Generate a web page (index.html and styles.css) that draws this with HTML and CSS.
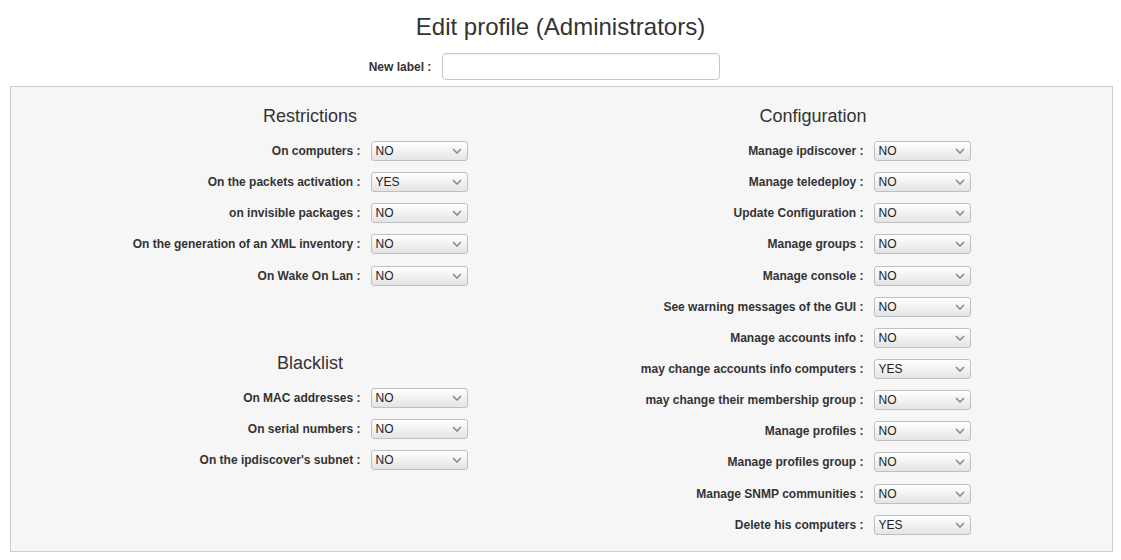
FILE: index.html
```html
<!DOCTYPE html>
<html>
<head>
<meta charset="utf-8">
<title>Edit profile</title>
<link rel="stylesheet" href="styles.css">
</head>
<body>
<h1 class="title">Edit profile (Administrators)</h1>
<div class="label-row">
  <label class="new-label" for="nl">New label :</label>
  <input id="nl" class="text-input" type="text">
</div>
<div class="panel">
  <div class="columns">
    <div class="col">
      <h3 class="section">Restrictions</h3>
      <div class="row"><span class="lbl">On computers :</span><div class="sel"><select><option>NO</option></select><svg class="chev" viewBox="0 0 10 6"><path d="M1 1l4 4 4-4" fill="none" stroke="#8a8a8a" stroke-width="1.6"/></svg></div></div>
      <div class="row"><span class="lbl">On the packets activation :</span><div class="sel"><select><option>YES</option></select><svg class="chev" viewBox="0 0 10 6"><path d="M1 1l4 4 4-4" fill="none" stroke="#8a8a8a" stroke-width="1.6"/></svg></div></div>
      <div class="row"><span class="lbl">on invisible packages :</span><div class="sel"><select><option>NO</option></select><svg class="chev" viewBox="0 0 10 6"><path d="M1 1l4 4 4-4" fill="none" stroke="#8a8a8a" stroke-width="1.6"/></svg></div></div>
      <div class="row"><span class="lbl">On the generation of an XML inventory :</span><div class="sel"><select><option>NO</option></select><svg class="chev" viewBox="0 0 10 6"><path d="M1 1l4 4 4-4" fill="none" stroke="#8a8a8a" stroke-width="1.6"/></svg></div></div>
      <div class="row"><span class="lbl">On Wake On Lan :</span><div class="sel"><select><option>NO</option></select><svg class="chev" viewBox="0 0 10 6"><path d="M1 1l4 4 4-4" fill="none" stroke="#8a8a8a" stroke-width="1.6"/></svg></div></div>

      <h3 class="section blacklist">Blacklist</h3>
      <div class="row"><span class="lbl">On MAC addresses :</span><div class="sel"><select><option>NO</option></select><svg class="chev" viewBox="0 0 10 6"><path d="M1 1l4 4 4-4" fill="none" stroke="#8a8a8a" stroke-width="1.6"/></svg></div></div>
      <div class="row"><span class="lbl">On serial numbers :</span><div class="sel"><select><option>NO</option></select><svg class="chev" viewBox="0 0 10 6"><path d="M1 1l4 4 4-4" fill="none" stroke="#8a8a8a" stroke-width="1.6"/></svg></div></div>
      <div class="row"><span class="lbl">On the ipdiscover's subnet :</span><div class="sel"><select><option>NO</option></select><svg class="chev" viewBox="0 0 10 6"><path d="M1 1l4 4 4-4" fill="none" stroke="#8a8a8a" stroke-width="1.6"/></svg></div></div>
    </div>
    <div class="col">
      <h3 class="section">Configuration</h3>
      <div class="row"><span class="lbl">Manage ipdiscover :</span><div class="sel"><select><option>NO</option></select><svg class="chev" viewBox="0 0 10 6"><path d="M1 1l4 4 4-4" fill="none" stroke="#8a8a8a" stroke-width="1.6"/></svg></div></div>
      <div class="row"><span class="lbl">Manage teledeploy :</span><div class="sel"><select><option>NO</option></select><svg class="chev" viewBox="0 0 10 6"><path d="M1 1l4 4 4-4" fill="none" stroke="#8a8a8a" stroke-width="1.6"/></svg></div></div>
      <div class="row"><span class="lbl">Update Configuration :</span><div class="sel"><select><option>NO</option></select><svg class="chev" viewBox="0 0 10 6"><path d="M1 1l4 4 4-4" fill="none" stroke="#8a8a8a" stroke-width="1.6"/></svg></div></div>
      <div class="row"><span class="lbl">Manage groups :</span><div class="sel"><select><option>NO</option></select><svg class="chev" viewBox="0 0 10 6"><path d="M1 1l4 4 4-4" fill="none" stroke="#8a8a8a" stroke-width="1.6"/></svg></div></div>
      <div class="row"><span class="lbl">Manage console :</span><div class="sel"><select><option>NO</option></select><svg class="chev" viewBox="0 0 10 6"><path d="M1 1l4 4 4-4" fill="none" stroke="#8a8a8a" stroke-width="1.6"/></svg></div></div>
      <div class="row"><span class="lbl">See warning messages of the GUI :</span><div class="sel"><select><option>NO</option></select><svg class="chev" viewBox="0 0 10 6"><path d="M1 1l4 4 4-4" fill="none" stroke="#8a8a8a" stroke-width="1.6"/></svg></div></div>
      <div class="row"><span class="lbl">Manage accounts info :</span><div class="sel"><select><option>NO</option></select><svg class="chev" viewBox="0 0 10 6"><path d="M1 1l4 4 4-4" fill="none" stroke="#8a8a8a" stroke-width="1.6"/></svg></div></div>
      <div class="row"><span class="lbl">may change accounts info computers :</span><div class="sel"><select><option>YES</option></select><svg class="chev" viewBox="0 0 10 6"><path d="M1 1l4 4 4-4" fill="none" stroke="#8a8a8a" stroke-width="1.6"/></svg></div></div>
      <div class="row"><span class="lbl">may change their membership group :</span><div class="sel"><select><option>NO</option></select><svg class="chev" viewBox="0 0 10 6"><path d="M1 1l4 4 4-4" fill="none" stroke="#8a8a8a" stroke-width="1.6"/></svg></div></div>
      <div class="row"><span class="lbl">Manage profiles :</span><div class="sel"><select><option>NO</option></select><svg class="chev" viewBox="0 0 10 6"><path d="M1 1l4 4 4-4" fill="none" stroke="#8a8a8a" stroke-width="1.6"/></svg></div></div>
      <div class="row"><span class="lbl">Manage profiles group :</span><div class="sel"><select><option>NO</option></select><svg class="chev" viewBox="0 0 10 6"><path d="M1 1l4 4 4-4" fill="none" stroke="#8a8a8a" stroke-width="1.6"/></svg></div></div>
      <div class="row"><span class="lbl">Manage SNMP communities :</span><div class="sel"><select><option>NO</option></select><svg class="chev" viewBox="0 0 10 6"><path d="M1 1l4 4 4-4" fill="none" stroke="#8a8a8a" stroke-width="1.6"/></svg></div></div>
      <div class="row"><span class="lbl">Delete his computers :</span><div class="sel"><select><option>YES</option></select><svg class="chev" viewBox="0 0 10 6"><path d="M1 1l4 4 4-4" fill="none" stroke="#8a8a8a" stroke-width="1.6"/></svg></div></div>
    </div>
  </div>
</div>
</body>
</html>
```
FILE: styles.css
```css
html, body {
  margin: 0;
  padding: 0;
  background: #ffffff;
  font-family: "Liberation Sans", Arial, sans-serif;
  color: #333333;
}

.title {
  margin: 14px 0 0 0;
  font-size: 24px;
  line-height: 26px;
  font-weight: normal;
  text-align: center;
  color: #333333;
}

.label-row {
  display: flex;
  justify-content: center;
  align-items: center;
  margin-top: 13px;
  padding-right: 32px;
}

.new-label {
  font-size: 12px;
  font-weight: bold;
  margin-right: 11px;
}

.text-input {
  box-sizing: border-box;
  width: 278px;
  height: 27px;
  border: 1px solid #c8c8c8;
  border-radius: 4px;
  background: #fff;
  box-shadow: inset 0 1px 1px rgba(0,0,0,0.06);
  font-family: inherit;
  font-size: 12px;
  padding: 2px 6px;
}

.panel {
  margin: 6px 8px 0 10px;
  border: 1px solid #cccccc;
  background: #f6f6f6;
  padding: 19px 0 16px 0;
}

.columns {
  width: 1006px;
  margin: 0 auto;
  display: grid;
  grid-template-columns: 503px 503px;
}

.section {
  margin: 0 0 15px 0;
  font-size: 18px;
  line-height: 20px;
  font-weight: normal;
  text-align: center;
  color: #333333;
}

.section.blacklist {
  margin-top: 67px;
}

.row {
  display: grid;
  grid-template-columns: 302px 97px;
  column-gap: 10px;
  align-items: center;
  height: 20px;
  margin-bottom: 11.15px;
}

.row:last-child {
  margin-bottom: 0;
}

.lbl {
  text-align: right;
  font-size: 12px;
  font-weight: bold;
  color: #333333;
  white-space: nowrap;
}

.sel {
  position: relative;
  width: 97px;
  height: 20px;
}

.sel select {
  -webkit-appearance: none;
  appearance: none;
  box-sizing: border-box;
  width: 97px;
  height: 20px;
  margin: 0;
  border: 1px solid #bfbfbf;
  border-radius: 3px;
  background: linear-gradient(#ffffff, #e4e4e4);
  font-family: "Liberation Sans", Arial, sans-serif;
  font-size: 12px;
  color: #222222;
  padding: 0 0 0 4px;
  line-height: 18px;
  outline: none;
}

.chev {
  position: absolute;
  right: 6px;
  top: 7px;
  width: 10px;
  height: 6px;
  pointer-events: none;
}
```
